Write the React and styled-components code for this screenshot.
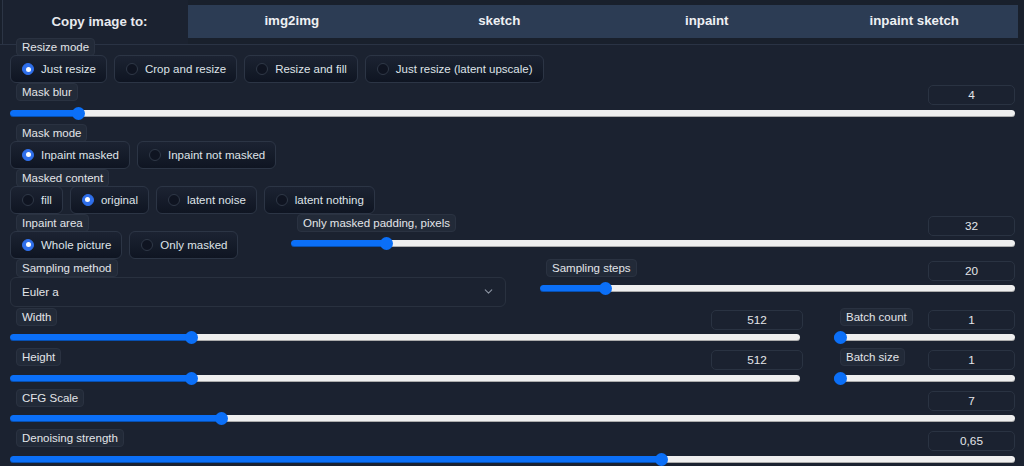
import React, { useState } from "react";
import styled, { createGlobalStyle } from "styled-components";
import { ChevronDown } from "lucide-react";

const Global = createGlobalStyle`
  html, body { margin: 0; padding: 0; background: #1b2230; }
  body { font-family: "Liberation Sans", Arial, sans-serif; color: #e5e7eb; }
  * { box-sizing: border-box; }
`;

const Page = styled.div`
  width: 1024px;
  height: 466px;
  overflow: hidden;
  background: #1b2230;
`;

const Header = styled.div`
  display: flex;
  height: 45px;
  padding-left: 2px;
  background: #19202c;
  border-bottom: 1px solid #2a3344;
`;

const CopyLabel = styled.div`
  width: 186px;
  display: flex;
  align-items: center;
  justify-content: center;
  padding: 0 0 2px 8px;
  background: #1b2230;
  border-left: 1px solid #2c3545;
  font-weight: bold;
  font-size: 13.3px;
  color: #e8eaee;
`;

const Tabs = styled.div`
  flex: 1;
  display: flex;
  margin: 5px 6px 6px 0;
  background: #2c3c54;
`;

const TabButton = styled.button`
  flex: 1;
  border: 0;
  background: transparent;
  color: #eef0f3;
  font: bold 13.3px "Liberation Sans", Arial, sans-serif;
  padding: 0 0 2px;
  cursor: pointer;
`;

const Body = styled.div`
  position: relative;
  margin-top: -7px;
  padding: 0 9px 0 10px;
  display: flex;
  flex-direction: column;
`;

const Tag = styled.span`
  align-self: flex-start;
  display: inline-flex;
  align-items: center;
  height: 18px;
  padding: 0 5px;
  margin-left: 6px;
  background: #222a38;
  border: 1px solid #2a3241;
  border-radius: 4px;
  font-size: 11.5px;
  color: #e3e5e9;
  white-space: nowrap;
`;

const RadioBlock = styled.div`
  display: flex;
  flex-direction: column;
  height: 45px;
`;

const Options = styled.div`
  display: flex;
  gap: 7px;
  margin-top: -1px;
`;

const RadioBox = styled.label`
  display: flex;
  align-items: center;
  gap: 7px;
  height: 28px;
  padding: 0 10px 0 11px;
  border: 1px solid #2c3545;
  border-radius: 6px;
  background: linear-gradient(to bottom, #1c2332, #0f1522);
  font-size: 11.5px;
  color: #dfe3e8;
  white-space: nowrap;
  cursor: pointer;
`;

const Dot = styled.span`
  position: relative;
  width: 12px;
  height: 12px;
  border-radius: 50%;
  flex: none;
  background: ${(p) => (p.$on ? "#2f6feb" : "#0f1421")};
  border: 1px solid ${(p) => (p.$on ? "#2f6feb" : "#2f3847")};
  &::after {
    content: "";
    display: ${(p) => (p.$on ? "block" : "none")};
    position: absolute;
    left: 50%;
    top: 50%;
    width: 5px;
    height: 5px;
    margin: -2.5px 0 0 -2.5px;
    border-radius: 50%;
    background: #fff;
  }
`;

const SliderWrap = styled.div`
  display: flex;
  flex-direction: column;
  height: 40.5px;
`;

const SliderHead = styled.div`
  display: flex;
  justify-content: space-between;
  align-items: flex-start;
  height: 22px;
`;

const NumberBox = styled.div`
  width: ${(p) => p.$w || 87}px;
  height: 20px;
  margin-top: 2px;
  display: flex;
  align-items: center;
  justify-content: center;
  border: 1px solid #2a3342;
  border-radius: 5px;
  font-size: 11.8px;
  color: #e3e5e9;
`;

const Range = styled.input`
  -webkit-appearance: none;
  appearance: none;
  display: block;
  width: calc(100% - ${(p) => p.$inset || 0}px);
  height: 16px;
  margin: 0;
  background: transparent;
  cursor: pointer;
  &::-webkit-slider-runnable-track {
    height: 7px;
    border-radius: 4px;
    background: linear-gradient(
      to right,
      #0b6ff7 0,
      #0b6ff7 var(--fill),
      #efefef var(--fill),
      #efefef 100%
    );
    box-shadow: inset 0 -1px 0 rgba(0, 0, 0, 0.28);
  }
  &::-webkit-slider-thumb {
    -webkit-appearance: none;
    appearance: none;
    width: 13px;
    height: 13px;
    margin-top: -3px;
    border: 0;
    border-radius: 50%;
    background: #0b6ff7;
  }
`;

const Row = styled.div`
  display: flex;
  gap: ${(p) => p.$gap}px;
`;

const Col = styled.div`
  display: flex;
  flex-direction: column;
  min-width: 0;
  ${(p) => (p.$w ? `width: ${p.$w}px; flex: none;` : "flex: 1;")}
`;

const SelectBlock = styled.div`
  display: flex;
  flex-direction: column;
  height: 49px;
`;

const Select = styled.div`
  display: flex;
  align-items: center;
  justify-content: space-between;
  height: 30px;
  padding: 0 10px 0 11px;
  border: 1px solid #29313f;
  border-radius: 6px;
  font-size: 11.6px;
  color: #e3e5e9;
  svg { color: #8b93a1; }
`;

function Radio({ label, options, value }) {
  const [sel, setSel] = useState(value);
  return (
    <RadioBlock>
      <Tag>{label}</Tag>
      <Options>
        {options.map((o) => (
          <RadioBox key={o} onClick={() => setSel(o)}>
            <Dot $on={sel === o} />
            {o}
          </RadioBox>
        ))}
      </Options>
    </RadioBlock>
  );
}

function Slider({ label, min, max, step = 1, value, display, boxW, inset }) {
  const [v, setV] = useState(value);
  const p = (v - min) / (max - min);
  return (
    <SliderWrap>
      <SliderHead>
        <Tag>{label}</Tag>
        <NumberBox $w={boxW}>{display ? display(v) : v}</NumberBox>
      </SliderHead>
      <Range
        type="range"
        min={min}
        max={max}
        step={step}
        value={v}
        $inset={inset}
        onChange={(e) => setV(Number(e.target.value))}
        style={{ "--fill": `calc(6.5px + ${p} * (100% - 13px))` }}
      />
    </SliderWrap>
  );
}

export default function App() {
  return (
    <Page>
      <Global />
      <Header>
        <CopyLabel>Copy image to:</CopyLabel>
        <Tabs>
          <TabButton>img2img</TabButton>
          <TabButton>sketch</TabButton>
          <TabButton>inpaint</TabButton>
          <TabButton>inpaint sketch</TabButton>
        </Tabs>
      </Header>
      <Body>
        <Radio
          label="Resize mode"
          value="Just resize"
          options={["Just resize", "Crop and resize", "Resize and fill", "Just resize (latent upscale)"]}
        />
        <Slider label="Mask blur" min={0} max={64} value={4} />
        <Radio label="Mask mode" value="Inpaint masked" options={["Inpaint masked", "Inpaint not masked"]} />
        <Radio
          label="Masked content"
          value="original"
          options={["fill", "original", "latent noise", "latent nothing"]}
        />
        <Row $gap={8}>
          <Col $w={273}>
            <Radio label="Inpaint area" value="Whole picture" options={["Whole picture", "Only masked"]} />
          </Col>
          <Col>
            <Slider label="Only masked padding, pixels" min={0} max={256} step={4} value={32} />
          </Col>
        </Row>
        <Row $gap={34}>
          <Col $w={496}>
            <SelectBlock>
              <Tag>Sampling method</Tag>
              <Select>
                Euler a
                <ChevronDown size={13} strokeWidth={2} />
              </Select>
            </SelectBlock>
          </Col>
          <Col>
            <Slider label="Sampling steps" min={1} max={150} value={20} />
          </Col>
        </Row>
        <Row $gap={31}>
          <Col $w={793}>
            <Slider label="Width" min={64} max={2048} step={8} value={512} boxW={92} inset={3} />
            <Slider label="Height" min={64} max={2048} step={8} value={512} boxW={92} inset={3} />
          </Col>
          <Col>
            <Slider label="Batch count" min={1} max={100} value={1} />
            <Slider label="Batch size" min={1} max={8} value={1} />
          </Col>
        </Row>
        <Slider label="CFG Scale" min={1} max={30} step={0.5} value={7} />
        <Slider
          label="Denoising strength"
          min={0}
          max={1}
          step={0.01}
          value={0.65}
          display={(v) => v.toFixed(2).replace(".", ",")}
        />
      </Body>
    </Page>
  );
}
